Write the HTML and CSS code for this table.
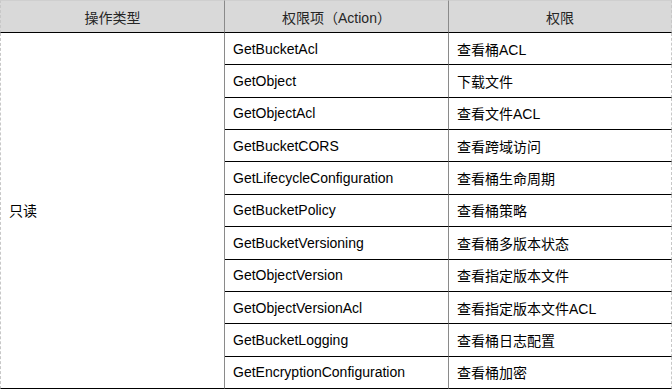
FILE: index.html
```html
<!DOCTYPE html>
<html lang="zh-CN">
<head>
<meta charset="utf-8">
<link rel="stylesheet" href="styles.css">
</head>
<body>
<table class="perm">
  <colgroup>
    <col class="c1"><col class="c2"><col class="c3">
  </colgroup>
  <thead>
    <tr>
      <th class="first">操作类型</th>
      <th>权限项（Action）</th>
      <th class="last">权限</th>
    </tr>
  </thead>
  <tbody>
    <tr><td class="first" rowspan="11">只读</td><td>GetBucketAcl</td><td class="last">查看桶ACL</td></tr>
    <tr><td>GetObject</td><td class="last">下载文件</td></tr>
    <tr><td>GetObjectAcl</td><td class="last">查看文件ACL</td></tr>
    <tr><td>GetBucketCORS</td><td class="last">查看跨域访问</td></tr>
    <tr><td>GetLifecycleConfiguration</td><td class="last">查看桶生命周期</td></tr>
    <tr><td>GetBucketPolicy</td><td class="last">查看桶策略</td></tr>
    <tr><td>GetBucketVersioning</td><td class="last">查看桶多版本状态</td></tr>
    <tr><td>GetObjectVersion</td><td class="last">查看指定版本文件</td></tr>
    <tr><td>GetObjectVersionAcl</td><td class="last">查看指定版本文件ACL</td></tr>
    <tr><td>GetBucketLogging</td><td class="last">查看桶日志配置</td></tr>
    <tr><td>GetEncryptionConfiguration</td><td class="last">查看桶加密</td></tr>
  </tbody>
</table>
</body>
</html>
```
FILE: styles.css
```css
html, body {
  margin: 0;
  padding: 0;
  background: #ffffff;
}
.perm {
  border-collapse: separate;
  border-spacing: 0;
  table-layout: fixed;
  width: 672px;
  font-family: "Liberation Sans", "Noto Sans CJK SC", sans-serif;
  font-size: 14px;
  color: #000;
}
.c1 { width: 225px; }
.c2 { width: 224px; }
.c3 { width: 223px; }
.perm th, .perm td {
  padding: 0 0 0 8px;
  border-bottom: 1px solid #000;
  border-right: 1px solid #8a8a8a;
  text-align: left;
  font-weight: normal;
  white-space: nowrap;
  vertical-align: middle;
  box-sizing: border-box;
}
.perm th {
  background: #d9d9d9;
  color: #262626;
  text-align: center;
  padding: 0;
  height: 33px;
  border-top: 1px solid #cfcfcf;
}
.perm td {
  height: 32.36px;
}
.perm .first {
  border-left: 1px dashed #c8c8c8;
}
.perm .last {
  border-right: 1px dashed #c8c8c8;
}
```
